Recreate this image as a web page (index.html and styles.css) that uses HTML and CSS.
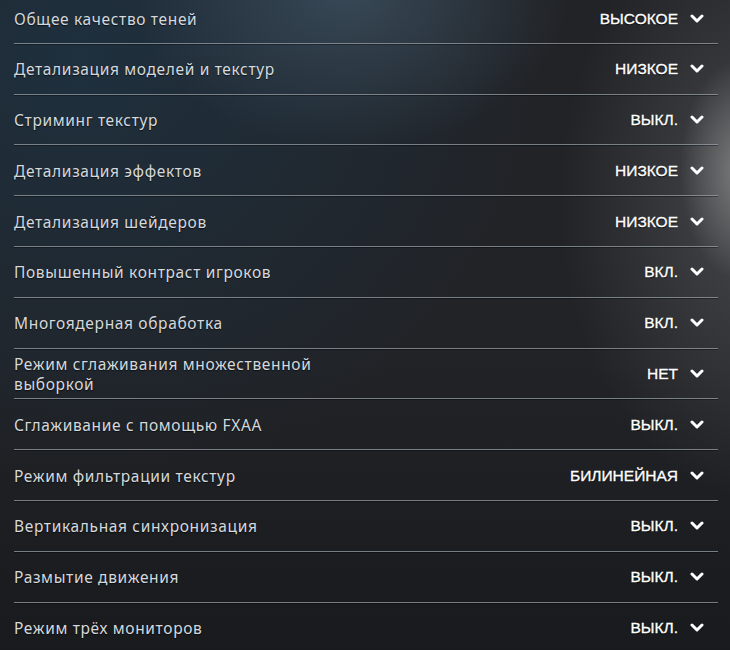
FILE: index.html
```html
<!DOCTYPE html>
<html lang="ru">
<head>
<meta charset="utf-8">
<title>Настройки графики</title>
<link rel="stylesheet" href="styles.css">
</head>
<body>
<div class="settings">
  <div class="row"><span class="label">Общее качество теней</span><span class="value">ВЫСОКОЕ</span><svg class="chev" viewBox="0 0 14 10"><path d="M2 2 L7 7 L12 2"/></svg></div>
  <div class="row"><span class="label">Детализация моделей и текстур</span><span class="value">НИЗКОЕ</span><svg class="chev" viewBox="0 0 14 10"><path d="M2 2 L7 7 L12 2"/></svg></div>
  <div class="row"><span class="label">Стриминг текстур</span><span class="value">ВЫКЛ.</span><svg class="chev" viewBox="0 0 14 10"><path d="M2 2 L7 7 L12 2"/></svg></div>
  <div class="row"><span class="label">Детализация эффектов</span><span class="value">НИЗКОЕ</span><svg class="chev" viewBox="0 0 14 10"><path d="M2 2 L7 7 L12 2"/></svg></div>
  <div class="row"><span class="label">Детализация шейдеров</span><span class="value">НИЗКОЕ</span><svg class="chev" viewBox="0 0 14 10"><path d="M2 2 L7 7 L12 2"/></svg></div>
  <div class="row"><span class="label">Повышенный контраст игроков</span><span class="value">ВКЛ.</span><svg class="chev" viewBox="0 0 14 10"><path d="M2 2 L7 7 L12 2"/></svg></div>
  <div class="row"><span class="label">Многоядерная обработка</span><span class="value">ВКЛ.</span><svg class="chev" viewBox="0 0 14 10"><path d="M2 2 L7 7 L12 2"/></svg></div>
  <div class="row"><span class="label">Режим сглаживания множественной выборкой</span><span class="value">НЕТ</span><svg class="chev" viewBox="0 0 14 10"><path d="M2 2 L7 7 L12 2"/></svg></div>
  <div class="row"><span class="label">Сглаживание с помощью FXAA</span><span class="value">ВЫКЛ.</span><svg class="chev" viewBox="0 0 14 10"><path d="M2 2 L7 7 L12 2"/></svg></div>
  <div class="row"><span class="label">Режим фильтрации текстур</span><span class="value">БИЛИНЕЙНАЯ</span><svg class="chev" viewBox="0 0 14 10"><path d="M2 2 L7 7 L12 2"/></svg></div>
  <div class="row"><span class="label">Вертикальная синхронизация</span><span class="value">ВЫКЛ.</span><svg class="chev" viewBox="0 0 14 10"><path d="M2 2 L7 7 L12 2"/></svg></div>
  <div class="row"><span class="label">Размытие движения</span><span class="value">ВЫКЛ.</span><svg class="chev" viewBox="0 0 14 10"><path d="M2 2 L7 7 L12 2"/></svg></div>
  <div class="row"><span class="label">Режим трёх мониторов</span><span class="value">ВЫКЛ.</span><svg class="chev" viewBox="0 0 14 10"><path d="M2 2 L7 7 L12 2"/></svg></div>
</div>
</body>
</html>
```
FILE: styles.css
```css
html, body {
  margin: 0;
  padding: 0;
  height: 100%;
}
body {
  width: 730px;
  height: 650px;
  overflow: hidden;
  background-color: #212327;
  background-image:
    radial-gradient(ellipse 60px 110px at 740px 170px, rgba(160,160,160,0.6), rgba(160,160,160,0) 100%),
    radial-gradient(ellipse 200px 300px at 760px 200px, rgba(110,110,112,0.5), rgba(110,110,112,0) 100%),
    radial-gradient(ellipse 220px 160px at 350px -10px, rgba(72,94,112,0.6), rgba(72,94,112,0) 100%),
    radial-gradient(ellipse 460px 420px at 80px 60px, rgba(30,50,66,0.85), rgba(30,50,66,0) 100%),
    linear-gradient(180deg, rgba(0,0,0,0) 0%, rgba(0,0,0,0) 55%, rgba(10,10,12,0.35) 100%);
  font-family: "Noto Sans", "Open Sans", sans-serif;
}
.settings {
  margin: -6px 12px 0 14px;
  display: flex;
  flex-direction: column;
}
.row {
  display: flex;
  align-items: center;
  height: 50.8px;
  padding: 1px 14px 0 0;
  box-sizing: border-box;
  border-bottom: 1px solid rgba(150,158,166,0.75);
  box-shadow: 0 1px 0 rgba(0,0,0,0.35);
}
.row:first-child {
  height: 49.8px;
}
.label {
  flex: 1;
  color: #d5d9dd;
  font-size: 15.5px;
  letter-spacing: 0.65px;
  line-height: 20px;
  max-width: 330px;
  text-shadow: 0 1px 1px rgba(0,0,0,0.6);
}
.value {
  margin-left: auto;
  color: #ffffff;
  font-family: "Liberation Sans", Arial, sans-serif;
  font-size: 15.5px;
  font-weight: 400;
  -webkit-text-stroke: 0.35px #ffffff;
  text-shadow: 0 0 1px #000, 0 1px 1px rgba(0,0,0,0.8);
}
.chev {
  width: 14px;
  height: 10px;
  margin-left: 12px;
  fill: none;
  stroke: #ffffff;
  stroke-width: 3;
  stroke-linecap: round;
  stroke-linejoin: round;
}
```
